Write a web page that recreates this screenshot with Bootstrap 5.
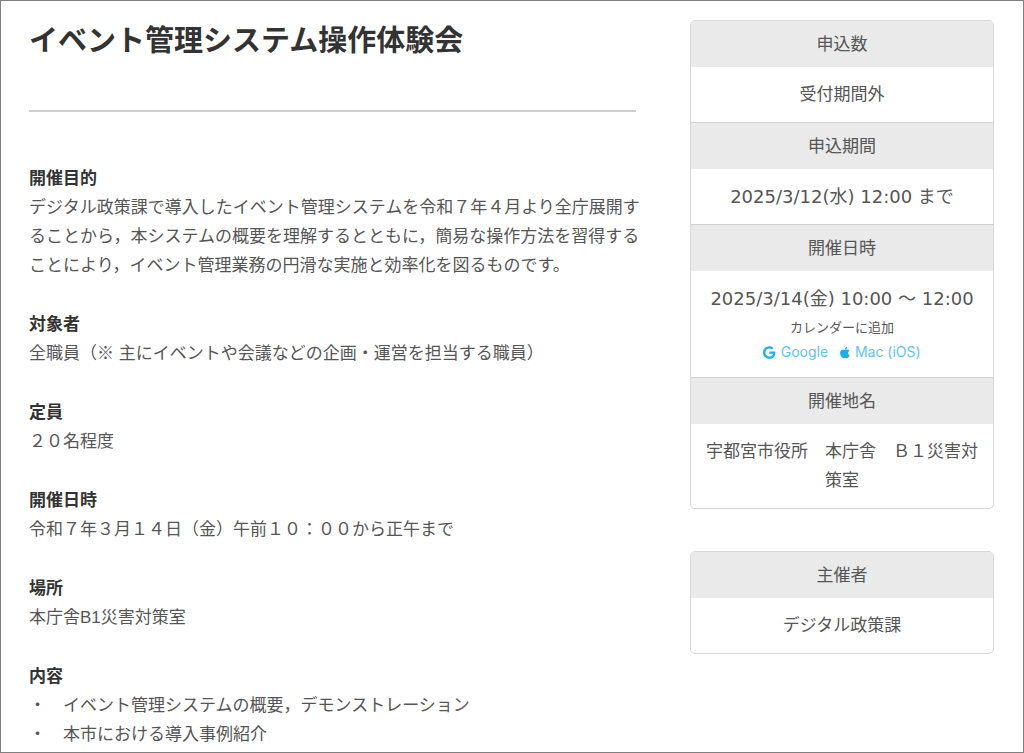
<!DOCTYPE html>
<html lang="ja">
<head>
<meta charset="utf-8">
<meta name="viewport" content="width=device-width, initial-scale=1">
<title>イベント管理システム操作体験会</title>
<link href="https://cdn.jsdelivr.net/npm/bootstrap@5.3.0/dist/css/bootstrap.min.css" rel="stylesheet">
<style>
  body {
    font-family: "Liberation Sans", "Noto Sans CJK JP", sans-serif;
    font-size: 17px;
    line-height: 29px;
    color: #555;
    background: #fff;
    border: 1px solid #808080;
  }
  .event-page {
    display: grid;
    grid-template-columns: minmax(0, 1fr);
    gap: 40px;
    padding: 19px 29px 0 28px;
  }
  @media (min-width: 992px) {
    .event-page { grid-template-columns: minmax(0, 1fr) 304px; gap: 46px; }
  }
  .event-title { font-size: 29px; line-height: 42px; font-weight: 700; color: #333; margin: 0 0 48px; }
  .title-rule { height: 2px; border: 0; opacity: 1; background: #d0d0d0; margin: 0 8px 52px 0; }
  .event-section { margin-bottom: 30px; }
  .event-section:last-child { margin-bottom: 0; }
  .event-section h2 { font-size: 17px; line-height: 29px; font-weight: 700; color: #333; margin: 0; }
  .info-card { border: 1px solid #d8d8d8; border-radius: 5px; overflow: hidden; text-align: center; }
  .info-card + .info-card { margin-top: 42px; }
  .info-card dt { background: #eaeaea; font-weight: 400; padding: 9px 12px 8px; }
  .info-card dd { margin: 0; padding: 13px; }
  .info-card dd + dt { border-top: 1px solid #d0d0d0; }
  .event-date { font-family: "DejaVu Sans", "Noto Sans CJK JP", sans-serif; font-size: 18px; }
  .calendar-add { font-size: 13px; line-height: 24px; margin-top: 3px; }
  .calendar-links { font-family: Inter, sans-serif; font-size: 14px; line-height: 24px; gap: 12px; }
  .calendar-links a { color: #5bc4f1; text-decoration: none; gap: 5px; }
  .calendar-links svg { height: 13px; fill: #1cb0ea; }
</style>
</head>
<body class="min-vh-100">
<div class="event-page">
  <main>
    <h1 class="event-title">イベント管理システム操作体験会</h1>
    <hr class="title-rule">
    <section class="event-section">
      <h2>開催目的</h2>
      <p class="mb-0">デジタル政策課で導入したイベント管理システムを令和７年４月より全庁展開することから，本システムの概要を理解するとともに，簡易な操作方法を習得することにより，イベント管理業務の円滑な実施と効率化を図るものです。</p>
    </section>
    <section class="event-section">
      <h2>対象者</h2>
      <p class="mb-0">全職員（※ 主にイベントや会議などの企画・運営を担当する職員）</p>
    </section>
    <section class="event-section">
      <h2>定員</h2>
      <p class="mb-0">２０名程度</p>
    </section>
    <section class="event-section">
      <h2>開催日時</h2>
      <p class="mb-0">令和７年３月１４日（金）午前１０：００から正午まで</p>
    </section>
    <section class="event-section">
      <h2>場所</h2>
      <p class="mb-0">本庁舎B1災害対策室</p>
    </section>
    <section class="event-section">
      <h2>内容</h2>
      <p class="mb-0">・　イベント管理システムの概要，デモンストレーション<br>・　本市における導入事例紹介</p>
    </section>
  </main>
  <aside>
    <dl class="info-card mb-0">
      <dt>申込数</dt>
      <dd>受付期間外</dd>
      <dt>申込期間</dt>
      <dd class="event-date">2025/3/12(水) 12:00 まで</dd>
      <dt>開催日時</dt>
      <dd>
        <div class="event-date">2025/3/14(金) 10:00 〜 12:00</div>
        <div class="calendar-add">カレンダーに追加</div>
        <div class="calendar-links d-flex justify-content-center">
          <a href="#" class="d-flex align-items-center"><svg viewBox="0 0 488 512" aria-hidden="true"><path d="M488 261.8C488 403.3 391.1 504 248 504 110.8 504 0 393.2 0 256S110.8 8 248 8c66.8 0 123 24.5 166.3 64.9l-67.5 64.9C258.5 52.6 94.3 116.6 94.3 256c0 86.5 69.1 156.6 153.7 156.6 98.2 0 135-70.4 140.8-106.9H248v-85.3h236.1c2.3 12.7 3.9 24.9 3.9 41.4z"/></svg>Google</a>
          <a href="#" class="d-flex align-items-center"><svg viewBox="0 0 384 512" aria-hidden="true"><path d="M318.7 268.7c-.2-36.7 16.4-64.4 50-84.8-18.8-26.9-47.2-41.7-84.7-44.6-35.5-2.8-74.3 20.7-88.5 20.7-15 0-49.4-19.7-76.4-19.7C63.3 141.2 4 184.8 4 273.5q0 39.3 14.4 81.2c12.8 36.7 59 126.7 107.2 125.2 25.2-.6 43-17.9 75.8-17.9 31.8 0 48.3 17.9 76.4 17.9 48.6-.7 90.4-82.5 102.6-119.3-65.2-30.7-61.7-90-61.7-91.9zm-56.6-164.2c27.3-32.4 24.8-61.9 24-72.5-24.1 1.4-52 16.4-67.9 34.9-17.5 19.8-27.8 44.3-25.6 71.9 26.1 2 49.9-11.4 69.5-34.3z"/></svg>Mac (iOS)</a>
        </div>
      </dd>
      <dt>開催地名</dt>
      <dd>宇都宮市役所　本庁舎　Ｂ１災害対策室</dd>
    </dl>
    <dl class="info-card mb-0">
      <dt>主催者</dt>
      <dd>デジタル政策課</dd>
    </dl>
  </aside>
</div>
<script src="https://cdn.jsdelivr.net/npm/bootstrap@5.3.0/dist/js/bootstrap.bundle.min.js"></script>
</body>
</html>
